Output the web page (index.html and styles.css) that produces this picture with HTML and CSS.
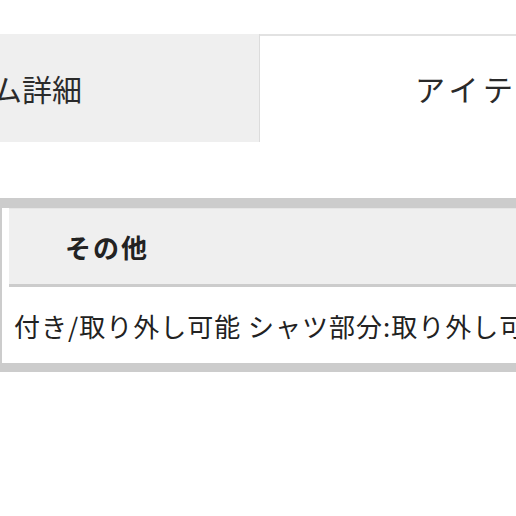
FILE: index.html
```html
<!DOCTYPE html>
<html lang="ja">
<head>
<meta charset="utf-8">
<link rel="stylesheet" href="styles.css">
</head>
<body>
<div class="page">
  <div class="tabs">
    <div class="tab tab-off"><span class="tab-label">アイテム詳細</span></div>
    <div class="tab tab-on"><span class="tab-label">アイテムサイズ</span></div>
  </div>
  <div class="panel">
    <div class="panel-inner">
      <div class="th">その他</div>
      <div class="td">付き/取り外し可能 シャツ部分:取り外し可能</div>
    </div>
  </div>
</div>
</body>
</html>
```
FILE: styles.css
```css
html, body {
  margin: 0;
  padding: 0;
  background: #ffffff;
  overflow: hidden;
}
.page {
  width: 516px;
  height: 516px;
  overflow: hidden;
  font-family: "Noto Sans CJK JP", "Noto Sans", sans-serif;
  color: #222222;
}
.tabs {
  display: flex;
  margin-top: 34px;
  height: 108px;
}
.tab {
  display: flex;
  align-items: center;
  font-size: 30px;
  white-space: nowrap;
  box-sizing: border-box;
  color: #2a2a2a;
}
.tab-off {
  width: 260px;
  flex: none;
  background: #efefef;
  border-right: 1px solid #dcdcdc;
  justify-content: flex-end;
  padding-right: 177px;
}
.tab-on {
  flex: 1;
  background: #ffffff;
  border-top: 2px solid #e2e2e2;
  padding-left: 155px;
  padding-bottom: 2px;
  letter-spacing: 5px;
}
.tab-label {
  display: block;
}
.panel {
  margin-top: 56px;
  background: #cccccc;
  padding: 10px 0 9px 2px;
}
.panel-inner {
  background: #ffffff;
  padding-left: 7px;
}
.th {
  height: 79px;
  background: #efefef;
  border-top: 1px solid #e6e6e6;
  box-sizing: border-box;
  border-bottom: 3px solid #cccccc;
  display: flex;
  align-items: center;
  padding-left: 56px;
  font-size: 26px;
  font-weight: bold;
  letter-spacing: 2px;
}
.td {
  height: 76px;
  display: flex;
  align-items: center;
  padding-left: 5px;
  font-size: 26px;
  letter-spacing: 1px;
  white-space: nowrap;
}
```
